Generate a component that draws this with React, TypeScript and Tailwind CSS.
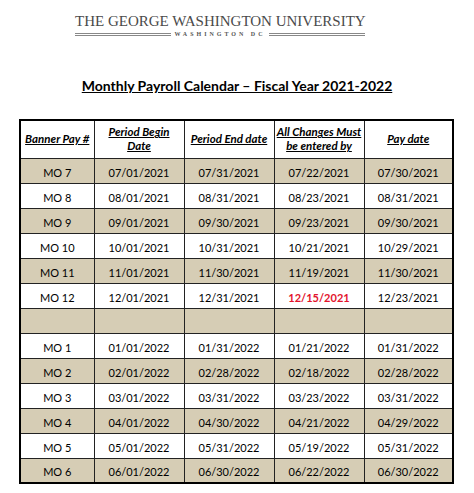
import React from "react";

const rows: { mo: string; b: string; e: string; c: string; p: string; tan: boolean; red?: boolean; blank?: boolean }[] = [
  { mo: "MO 7", b: "07/01/2021", e: "07/31/2021", c: "07/22/2021", p: "07/30/2021", tan: true },
  { mo: "MO 8", b: "08/01/2021", e: "08/31/2021", c: "08/23/2021", p: "08/31/2021", tan: false },
  { mo: "MO 9", b: "09/01/2021", e: "09/30/2021", c: "09/23/2021", p: "09/30/2021", tan: true },
  { mo: "MO 10", b: "10/01/2021", e: "10/31/2021", c: "10/21/2021", p: "10/29/2021", tan: false },
  { mo: "MO 11", b: "11/01/2021", e: "11/30/2021", c: "11/19/2021", p: "11/30/2021", tan: true },
  { mo: "MO 12", b: "12/01/2021", e: "12/31/2021", c: "12/15/2021", p: "12/23/2021", tan: false, red: true },
  { mo: "", b: "", e: "", c: "", p: "", tan: true, blank: true },
  { mo: "MO 1", b: "01/01/2022", e: "01/31/2022", c: "01/21/2022", p: "01/31/2022", tan: false },
  { mo: "MO 2", b: "02/01/2022", e: "02/28/2022", c: "02/18/2022", p: "02/28/2022", tan: true },
  { mo: "MO 3", b: "03/01/2022", e: "03/31/2022", c: "03/23/2022", p: "03/31/2022", tan: false },
  { mo: "MO 4", b: "04/01/2022", e: "04/30/2022", c: "04/21/2022", p: "04/29/2022", tan: true },
  { mo: "MO 5", b: "05/01/2022", e: "05/31/2022", c: "05/19/2022", p: "05/31/2022", tan: false },
  { mo: "MO 6", b: "06/01/2022", e: "06/30/2022", c: "06/22/2022", p: "06/30/2022", tan: true },
];

function Th({ children }: { children: React.ReactNode }) {
  return (
    <th className="border border-[#222] align-middle text-center font-bold italic underline text-[11.5px] leading-[14px] text-black p-0">
      {children}
    </th>
  );
}

function Td({ children, red }: { children: React.ReactNode; red?: boolean }) {
  return (
    <td
      className={
        "border border-[#222] align-bottom text-center text-[11px] leading-[14px] pb-[3px] p-0 " +
        (red ? "text-[#e3132c] font-bold" : "text-black")
      }
    >
      {children}
    </td>
  );
}

export default function App() {
  return (
    <div className="w-[474px] h-[493px] bg-white overflow-hidden" style={{ fontFamily: "Lato, 'Open Sans', sans-serif" }}>
      {/* Logo */}
      <div className="ml-[75px] w-[290px] pt-[14px] flex flex-col">
        <div
          className="text-[15px] leading-[15px] text-[#4a4a4a] whitespace-nowrap text-center"
          style={{ fontFamily: "'Liberation Serif', 'DejaVu Serif', serif" }}
        >
          THE GEORGE WASHINGTON UNIVERSITY
        </div>
        <div className="mt-[2px] flex items-center">
          <div className="flex-1 flex flex-col gap-[1px]">
            <div className="h-[1px] bg-[#888]" />
            <div className="h-[1px] bg-[#888]" />
          </div>
          <div
            className="px-[3px] text-[6px] leading-[6px] tracking-[3px] text-[#555] font-bold"
            style={{ fontFamily: "'Liberation Serif', serif" }}
          >
            WASHINGTON DC
          </div>
          <div className="flex-1 flex flex-col gap-[1px]">
            <div className="h-[1px] bg-[#888]" />
            <div className="h-[1px] bg-[#888]" />
          </div>
        </div>
      </div>

      {/* Title */}
      <div className="mt-[36px] text-center">
        <span className="text-[14px] leading-[16px] font-bold underline text-black">
          Monthly Payroll Calendar – Fiscal Year 2021-2022
        </span>
      </div>

      {/* Table */}
      <div className="ml-[19px] mt-[22px]">
        <table className="border-collapse border-2 border-black table-fixed w-[433px]">
          <colgroup>
            <col className="w-[74px]" />
            <col className="w-[90px]" />
            <col className="w-[90px]" />
            <col className="w-[90px]" />
            <col className="w-[89px]" />
          </colgroup>
          <thead>
            <tr className="h-[38px]">
              <Th>Banner Pay #</Th>
              <Th>
                Period Begin
                <br />
                Date
              </Th>
              <Th>Period End date</Th>
              <Th>
                All Changes Must
                <br />
                be entered by
              </Th>
              <Th>Pay date</Th>
            </tr>
          </thead>
          <tbody>
            {rows.map((r, i) => (
              <tr key={i} className={"h-[25px] " + (r.tan ? "bg-[#d6cdb5]" : "bg-white")}>
                <Td>{r.mo}</Td>
                <Td>{r.b}</Td>
                <Td>{r.e}</Td>
                <Td red={r.red}>{r.c}</Td>
                <Td>{r.p}</Td>
              </tr>
            ))}
          </tbody>
        </table>
      </div>
    </div>
  );
}
